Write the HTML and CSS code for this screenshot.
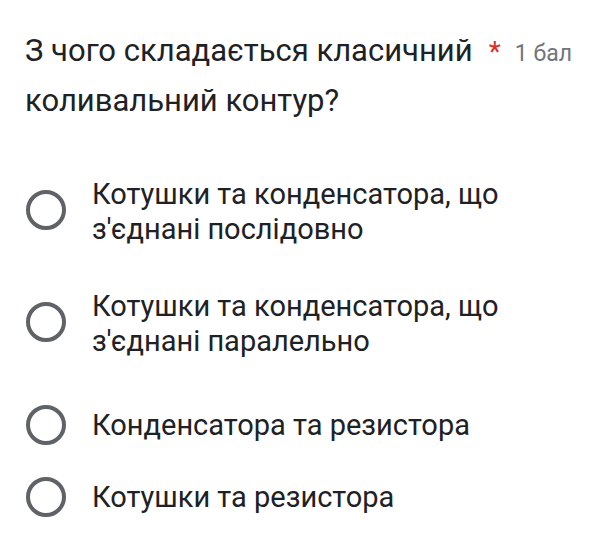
FILE: index.html
```html
<!DOCTYPE html>
<html lang="uk">
<head>
<meta charset="utf-8">
<title>Питання</title>
<link rel="stylesheet" href="styles.css">
</head>
<body>
<div class="question">
  <div class="q-head">
    <div class="q-title">З чого складається класичний коливальний контур?</div>
    <div class="q-meta"><span class="req">*</span><span class="pts">1 бал</span></div>
  </div>
  <div class="options">
    <label class="opt">
      <span class="radio"></span>
      <span class="opt-text">Котушки та конденсатора, що з'єднані послідовно</span>
    </label>
    <label class="opt opt-b">
      <span class="radio"></span>
      <span class="opt-text">Котушки та конденсатора, що з'єднані паралельно</span>
    </label>
    <label class="opt opt-c">
      <span class="radio"></span>
      <span class="opt-text">Конденсатора та резистора</span>
    </label>
    <label class="opt opt-d">
      <span class="radio"></span>
      <span class="opt-text">Котушки та резистора</span>
    </label>
  </div>
</div>
</body>
</html>
```

FILE: styles.css
```css
html, body {
  margin: 0;
  padding: 0;
  background: #ffffff;
}
body {
  font-family: Roboto, "Noto Sans", "Liberation Sans", sans-serif;
  color: #202124;
}
.question {
  padding: 26px 31px 0 25px;
}
.q-head {
  display: flex;
  align-items: baseline;
}
.q-title {
  flex: 1 1 auto;
  min-width: 0;
  font-size: 31px;
  line-height: 50px;
}
.q-meta {
  flex: 0 0 auto;
  display: flex;
  align-items: baseline;
}
.req {
  color: #d93025;
  font-size: 28px;
  line-height: 50px;
}
.pts {
  color: #70757a;
  font-size: 23px;
  margin-left: 14px;
}
.options {
  margin-top: 51px;
  display: flex;
  flex-direction: column;
}
.opt {
  display: flex;
  align-items: center;
  gap: 26px;
  padding-left: 1px;
}
.opt-b { margin-top: 42px; }
.opt-c { margin-top: 46px; }
.opt-d { margin-top: 32px; }
.radio {
  flex: 0 0 auto;
  width: 32px;
  height: 32px;
  border: 4px solid #5f6368;
  border-radius: 50%;
  margin-top: -4px;
}
.opt-c .radio,
.opt-d .radio {
  margin-top: 0;
}
.opt-text {
  font-size: 29px;
  line-height: 35px;
  max-width: 440px;
}
```
